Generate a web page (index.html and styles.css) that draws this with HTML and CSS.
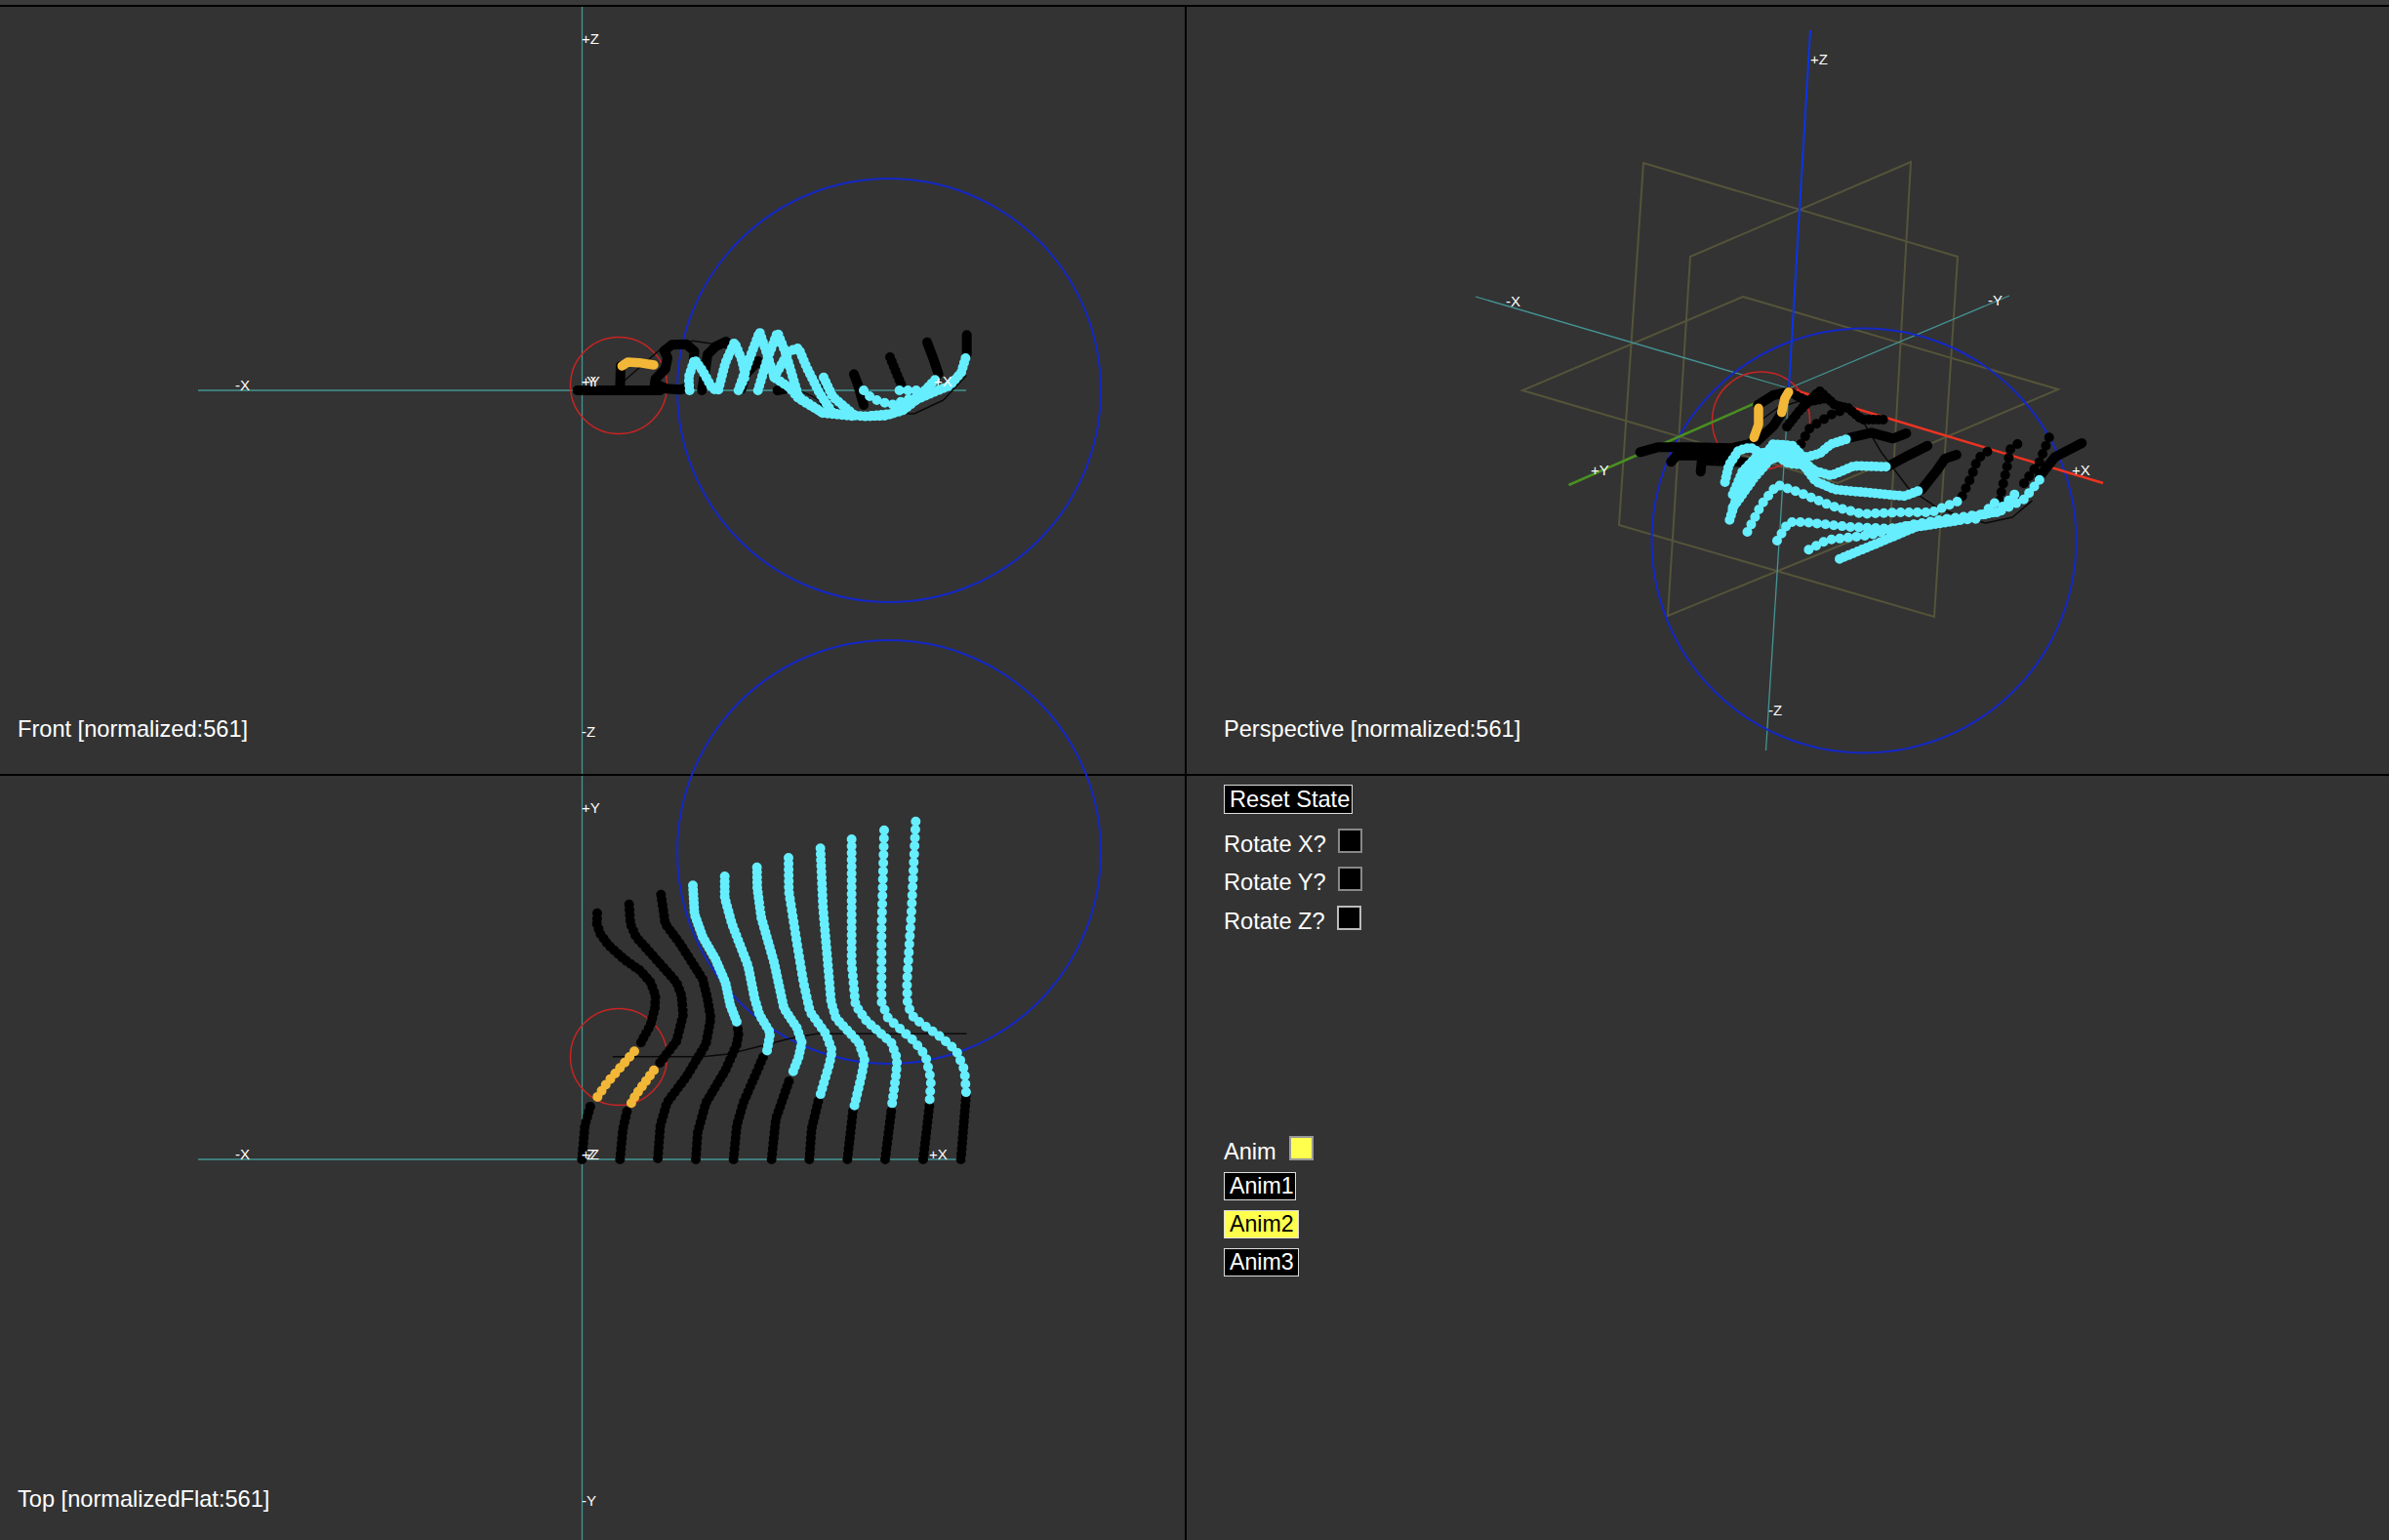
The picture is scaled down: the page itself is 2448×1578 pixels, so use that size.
FILE: index.html
```html
<!DOCTYPE html>
<html lang="en">
<head>
<meta charset="utf-8">
<title>Viewports</title>
<link rel="stylesheet" href="styles.css">
</head>
<body>
<div class="topstrip"></div>
<main class="viewports">
  <section class="view">
    <svg class="canvas" viewBox="0 7 1214 786" width="1214" height="786">
      <line class="axis" x1="596.5" y1="7" x2="596.5" y2="793"/>
      <line class="axis" x1="203" y1="400" x2="990" y2="400"/>
      <circle class="sphere" cx="911" cy="400" r="217"/>
      <circle class="root" cx="634" cy="395" r="49.5"/>
      <g class="mapped front-map">
        <polyline class="trace" points="205,300 360,165 450,148 530,160 600,190 650,225 700,270 800,310 920,370 1130,372 1220,330 1290,255"/>
        <polyline class="line-k" points="95,300 350,300"/>
        <polyline class="line-k" points="226,295 228,225"/>
        <polyline class="line-k" points="330,300 335,265 365,235 372,200 362,178 385,160 430,158 455,180 452,210"/>
        <polyline class="line-k" points="345,285 370,295 410,298 440,290"/>
        <polyline class="line-k" points="478,300 488,240 495,190 520,165 552,150"/>
        <polyline class="line-k" points="600,295 612,250 650,210"/>
        <polyline class="line-k" points="710,300 735,295"/>
        <polyline class="line-k" points="835,290 855,340"/>
        <polyline class="line-k" points="945,250 958,285 975,345"/>
        <polyline class="dot-k" points="1056,198 1075,245 1098,300"/>
        <polyline class="line-k" points="1170,152 1190,205 1205,250"/>
        <polyline class="line-k" points="1292,130 1292,190"/>
        <polyline class="line-y" points="232,225 250,213 285,215 330,222"/>
        <polyline class="dot-c" points="440,300 437,260 455,205 480,240 510,295 528,300 550,215 578,152 600,205 612,255 590,300"/>
        <polyline class="dot-c" points="590,300 625,200 655,120 680,195 700,260 745,290 775,325 850,370 950,380"/>
        <polyline class="dot-c" points="650,300 680,200 710,122 735,185 775,320 850,370"/>
        <polyline class="dot-c" points="700,260 745,180 775,170 800,230 840,310 880,370 975,380 1040,378 1095,362 1130,335 1200,262"/>
        <polyline class="dot-c" points="852,260 880,320 945,375"/>
        <polyline class="dot-c" points="1000,378 1060,372 1100,345 1180,310 1240,285 1275,245 1290,195"/>
        <polyline class="dot-c-wide" points="975,300 1000,325 1060,345 1120,325 1180,300"/>
        <polyline class="dot-c-wide" points="1085,300 1150,300"/>
      </g>
      <text class="tick" x="596" y="45">+Z</text>
      <text class="tick" x="596" y="755">-Z</text>
      <text class="tick" x="241" y="400">-X</text>
      <text class="tick" x="957" y="396">+X</text>
      <text class="tick" x="596" y="396">+Y</text>
      <text class="tick" x="596" y="396">-Y</text>
      <text class="caption" x="18" y="755">Front [normalized:561]</text>
    </svg>
  </section>

  <section class="view">
    <svg class="canvas" viewBox="1216 7 1232 786" width="1232" height="786">
      <g class="plane">
        <polygon points="1684,167 2006,263 1982,632 1659,538"/>
        <polygon points="1958,166 1732,263 1709,631 1937,538"/>
        <polygon points="1786,304 2109,399 1883,495 1560,400"/>
      </g>
      <line class="axis" x1="1512" y1="304" x2="1833" y2="398"/>
      <line class="axis" x1="2059" y1="303" x2="1833" y2="398"/>
      <line class="axis" x1="1833" y1="398" x2="1809.5" y2="769"/>
      <circle class="sphere" cx="1910" cy="554" r="217.5"/>
      <circle class="root" cx="1804.5" cy="431" r="50"/>
      <line class="axis-z" x1="1855" y1="31" x2="1833" y2="398"/>
      <line class="axis-x" x1="1833" y1="398" x2="2155" y2="495"/>
      <line class="axis-y" x1="1833" y1="398" x2="1607.5" y2="497"/>
      <g class="mapped persp-map">
        <polyline class="trace" points="620,270 660,235 740,205 800,210 880,270 930,370 1000,480 1080,545 1200,588 1270,570 1320,520"/>
        <polyline class="line-k" points="305,370 350,355 450,355 540,358 590,345 600,330"/>
        <polyline class="line-k" points="385,400 400,380 450,380 520,378 600,345 650,290 672,250"/>
        <polyline class="line-k" points="462,430 465,395 560,400 610,405"/>
        <polyline class="line-k" points="610,225 650,195 690,185"/>
        <polyline class="dot-k" points="935,270 880,270 845,235 810,225 770,182 720,240 680,300"/>
        <polyline class="dot-k" points="700,190 740,215 785,205"/>
        <polyline class="dot-k-wide" points="722,345 745,295 800,255 850,232"/>
        <polyline class="line-k" points="850,325 905,310 960,328 995,312"/>
        <polyline class="line-k" points="945,415 1000,380 1050,350"/>
        <polyline class="line-k" points="1035,485 1075,425 1095,390 1125,378"/>
        <polyline class="dot-k-wide" points="1205,368 1180,390 1165,440 1135,518"/>
        <polyline class="dot-k-wide" points="1283,345 1265,360 1255,420 1235,525"/>
        <polyline class="dot-k-wide" points="1365,325 1340,400 1290,482"/>
        <polyline class="line-k" points="1340,445 1380,385 1450,342"/>
        <polyline class="line-y" points="600,325 612,285 612,235"/>
        <polyline class="line-y" points="672,248 680,205 690,185"/>
        <polyline class="dot-c" points="525,462 535,410 560,365 590,355 620,375"/>
        <polyline class="dot-c" points="545,500 570,430 610,380 650,360 700,380 750,425 800,442 860,412 945,415"/>
        <polyline class="dot-c" points="545,540 590,440 640,370 670,355 710,380 760,460 810,485 900,495 990,505 1035,485"/>
        <polyline class="dot-c" points="537,578 555,510 600,430 650,345 700,350 740,400"/>
        <polyline class="dot-c" points="555,525 600,450 640,395 680,375 730,400 770,440"/>
        <polyline class="dot-c" points="560,490 610,410 650,375 690,405 740,410"/>
        <polyline class="dot-c" points="700,395 770,375 800,345 845,328"/>
        <polyline class="dot-c-wide" points="583,615 620,530 660,470 720,495 800,535 880,560 980,555 1060,555 1135,518"/>
        <polyline class="dot-c-wide" points="660,642 690,585 730,585 850,600 950,605 1050,590 1100,580 1180,575 1225,525"/>
        <polyline class="dot-c-wide" points="742,670 790,640 900,625 1000,595 1100,575 1230,555 1290,482"/>
        <polyline class="dot-c" points="822,698 920,650 1020,600 1130,580"/>
        <polyline class="dot-c-wide" points="1340,455 1300,515 1240,550 1130,580"/>
      </g>
      <text class="tick" x="1855" y="66">+Z</text>
      <text class="tick" x="1812" y="733">-Z</text>
      <text class="tick" x="1543" y="314">-X</text>
      <text class="tick" x="2037" y="313">-Y</text>
      <text class="tick" x="1630" y="487">+Y</text>
      <text class="tick" x="2123" y="487">+X</text>
      <text class="caption" x="1254" y="755">Perspective [normalized:561]</text>
    </svg>
  </section>

  <section class="view">
    <svg class="canvas canvas-over" viewBox="0 795 1214 783" width="1214" height="783">
      <line class="axis" x1="596.5" y1="795" x2="596.5" y2="1578"/>
      <line class="axis" x1="203" y1="1188" x2="990" y2="1188"/>
      <circle class="sphere" cx="911" cy="873" r="217"/>
      <circle class="root" cx="634" cy="1083" r="49.5"/>
      <g class="mapped top-map">
        <polyline class="trace" points="205,788 480,788 560,780 660,755 750,732 830,718 1290,718"/>
        <polyline class="dot-k" points="109,1104 118,1000 135,940"/>
        <polyline class="dot-k" points="156,347 155,380 165,410 190,445 240,490 290,525 320,560 335,600 333,640 320,690 285,755"/>
        <polyline class="dot-k" points="226,1104 235,1010 250,945"/>
        <polyline class="dot-k" points="254,320 258,380 275,420 320,470 400,560 415,600 420,660 400,740 345,812"/>
        <polyline class="dot-k" points="352,290 365,380 410,440 480,550 495,610 505,670 490,750 430,850 370,930 350,1000 342,1104"/>
        <polyline class="dot-k" points="459,1104 465,1020 490,930 550,830 585,750 590,720 587,690"/>
        <polyline class="dot-k" points="575,1104 585,1000 605,930 670,780"/>
        <polyline class="dot-k" points="692,1104 705,980 750,850"/>
        <polyline class="dot-k" points="808,1104 815,1010 838,915"/>
        <polyline class="dot-k" points="925,1104 942,955"/>
        <polyline class="dot-k" points="1041,1104 1060,955"/>
        <polyline class="dot-k" points="1158,1104 1177,940"/>
        <polyline class="dot-k" points="1274,1104 1290,905"/>
        <polyline class="dot-y" points="270,772 185,870 150,922"/>
        <polyline class="dot-y dot-y-tight" points="330,830 275,905 254,943"/>
        <polyline class="dot-c gap-4" points="450,262 455,350 480,420 520,490 550,560 565,630 587,687"/>
        <polyline class="dot-c gap-5" points="548,234 548,300 570,380 620,510 640,610 655,660 688,715 678,770"/>
        <polyline class="dot-c gap-5" points="647,206 648,270 660,360 700,500 730,640 770,700 785,745 775,790 755,842"/>
        <polyline class="dot-c gap-6" points="744,177 745,280 770,440 790,560 810,650 860,720 878,770 870,810 840,912"/>
        <polyline class="dot-c gap-6" points="842,148 850,330 875,620 890,670 960,745 978,795 970,840 944,950"/>
        <polyline class="dot-c gap-7" points="938,120 938,500 950,630 985,680 1060,745 1078,795 1075,840 1060,950"/>
        <polyline class="dot-c gap-8" points="1038,92 1030,400 1030,620 1050,670 1130,740 1165,785 1182,860 1177,935"/>
        <polyline class="dot-c gap-8" points="1135,65 1122,340 1108,560 1110,630 1130,670 1215,730 1260,770 1285,830 1290,900"/>
      </g>
      <text class="tick" x="596" y="833">+Y</text>
      <text class="tick" x="596" y="1543">-Y</text>
      <text class="tick" x="241" y="1188">-X</text>
      <text class="tick" x="952" y="1188">+X</text>
      <text class="tick" x="596" y="1188">+Z</text>
      <text class="tick" x="596" y="1188">-Z</text>
      <text class="caption" x="18" y="1544">Top [normalizedFlat:561]</text>
    </svg>
  </section>

  <section class="controls">
    <button class="btn btn-reset" type="button">Reset State</button>
    <div class="toggle"><span class="toggle-label">Rotate X?</span><span class="box"></span></div>
    <div class="toggle"><span class="toggle-label">Rotate Y?</span><span class="box"></span></div>
    <div class="toggle"><span class="toggle-label">Rotate Z?</span><span class="box box-tight"></span></div>
    <div class="toggle toggle-anim"><span class="toggle-label toggle-label-anim">Anim</span><span class="box box-on"></span></div>
    <button class="btn btn-anim btn-anim-first" type="button">Anim1</button>
    <button class="btn btn-anim btn-wide btn-on" type="button">Anim2</button>
    <button class="btn btn-anim btn-wide" type="button">Anim3</button>
  </section>
</main>
</body>
</html>
```
FILE: styles.css
```css
* { box-sizing: border-box; }

html, body {
  margin: 0;
  height: 100%;
  overflow: hidden;
  background: #333333;
}

body {
  font-family: "Liberation Sans", Arial, sans-serif;
  color: #ffffff;
}

.topstrip {
  height: 7px;
  background: #3a3a3a;
  border-bottom: 2px solid #000000;
}

.viewports {
  display: grid;
  grid-template-columns: 1214px 1232px;
  grid-template-rows: 786px 783px;
  gap: 2px;
  background: #000000;
}

.view, .controls { background: #333333; }

.canvas {
  display: block;
  overflow: visible;
}

.canvas-over {
  position: relative;
  z-index: 1;
}

.axis { stroke: #459494; stroke-width: 1.3; }
.axis-z { stroke: #0b34e8; stroke-width: 2; }
.axis-x { stroke: #ee3322; stroke-width: 2.5; }
.axis-y { stroke: #4a8f22; stroke-width: 2.5; }

.sphere { fill: none; stroke: #1428c8; stroke-width: 2; }
.root { fill: none; stroke: #c82424; stroke-width: 1.5; }

.plane polygon { fill: none; stroke: #55543a; stroke-width: 2; }

.mapped polyline {
  fill: none;
  stroke-linecap: round;
  stroke-linejoin: round;
  vector-effect: non-scaling-stroke;
}

.front-map { transform: translate(560px, 300px) scale(0.33333); }
.persp-map { transform: translate(1560px, 340px) scale(0.3954, 0.33333); }
.top-map { transform: translate(560px, 820px) scale(0.33333); }

.mapped .trace { stroke: #0a0a0a; stroke-width: 1.5; }
.mapped .line-k { stroke: #000000; stroke-width: 10; }
.mapped .line-y { stroke: #f3b737; stroke-width: 9.5; }

.mapped .dot-k { stroke: #000000; stroke-width: 10; stroke-dasharray: 0 5; }
.mapped .dot-k-wide { stroke: #000000; stroke-width: 10; stroke-dasharray: 0 9; }
.mapped .dot-c { stroke: #66eeff; stroke-width: 10; stroke-dasharray: 0 5; }
.mapped .dot-c-wide { stroke: #66eeff; stroke-width: 10; stroke-dasharray: 0 8.6; }
.mapped .dot-y { stroke: #f3b737; stroke-width: 10; stroke-dasharray: 0 7.5; }
.mapped .dot-y-tight { stroke-dasharray: 0 6.8; }

.top-map .dot-k { stroke-width: 10; stroke-dasharray: 0 5.5; }
.top-map .dot-c { stroke-width: 10; }
.mapped .gap-4 { stroke-dasharray: 0 4.5; }
.mapped .gap-5 { stroke-dasharray: 0 5.2; }
.mapped .gap-6 { stroke-dasharray: 0 6; }
.mapped .gap-7 { stroke-dasharray: 0 7; }
.mapped .gap-8 { stroke-dasharray: 0 8.4; }

.tick {
  font-family: "Liberation Sans", Arial, sans-serif;
  font-size: 15px;
  fill: #ffffff;
}

.caption {
  font-family: "Liberation Sans", Arial, sans-serif;
  font-size: 23.6px;
  fill: #ffffff;
}

.controls {
  display: flex;
  flex-direction: column;
  align-items: flex-start;
  padding: 9px 0 0 38px;
  font-size: 23.6px;
}

.btn {
  display: block;
  height: 30px;
  padding: 0 0 0 5px;
  border: 1.5px solid #dddddd;
  background: #000000;
  color: #ffffff;
  font: inherit;
  line-height: 26px;
  text-align: left;
  white-space: nowrap;
}

.btn-reset { width: 132px; }
.btn-anim { height: 29px; margin-bottom: 10px; font-size: 23.2px; }
.btn-anim-first { width: 74px; margin-top: 12px; }
.btn-wide { width: 77px; }
.btn-on { background: #ffff4d; color: #000000; }

.toggle {
  display: flex;
  align-items: flex-end;
  height: 25px;
  margin-top: 14.5px;
}

.toggle-anim { margin-top: 211px; }

.toggle-label {
  width: 117px;
  line-height: 18px;
}

.toggle-label-anim { width: 67px; }

.box {
  display: block;
  width: 25px;
  height: 25px;
  border: 2px solid #888888;
  background: #000000;
}

.box-tight { margin-left: -1px; border-color: #bbbbbb; }
.box-on { background: #ffff4d; border-color: #999999; }
```
